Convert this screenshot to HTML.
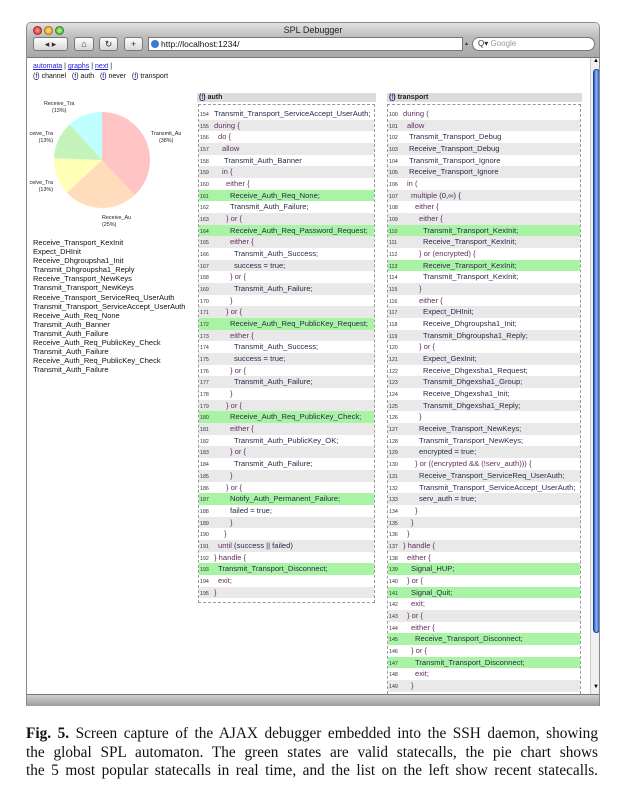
<!DOCTYPE html>
<html><head><meta charset="utf-8"><style>
*{margin:0;padding:0;box-sizing:border-box}
body{width:624px;height:800px;background:#fff;position:relative;overflow:hidden;font-family:"Liberation Sans",sans-serif}
.a{position:absolute}
.win{left:26px;top:22px;width:574px;height:684px;border:1px solid #8a8a8a;border-radius:5px 5px 0 0;overflow:hidden;background:#fff}
.tb{left:0;top:0;width:574px;height:35px;background:linear-gradient(#e2e2e2,#bdbdbd 40%,#a9a9a9);border-bottom:1px solid #777}
.dot{width:9px;height:9px;border-radius:50%;top:3px;border:1px solid rgba(0,0,0,.35)}
.btn{top:14px;height:14px;background:linear-gradient(#fdfdfd,#d8d8d8);border:1px solid #777;border-radius:3px;font-size:9px;text-align:center;line-height:12px;color:#333}
.fld{background:#fff;border:1px solid #777;height:14px;top:14px}
.sb{left:563px;top:35px;width:10px;height:637px;background:#f0f0f0;border-left:1px solid #ccc}
.thumb{left:2px;top:11px;width:7px;height:564px;border-radius:4px;background:linear-gradient(90deg,#2a5cc8,#8fb8f5 50%,#2a5cc8);border:1px solid #1d3f99}
.lk{font-size:7px;color:#111}
.lk u{color:#1a1ad0}
.hd{height:9px;background:#dcdcdc;font-size:7px;font-weight:bold;color:#222;line-height:9px;padding-left:2px}
.hd u{color:#1a1ad0;font-weight:normal}
.box{border:1px dashed #999;padding:3px 0 3px 0}
.r{height:11.68px;line-height:11.68px;font-size:7.6px;color:#2a2a4a;white-space:nowrap;position:relative}
.r:nth-child(even){background:#e9e9e9}
.r.g{background:#a8f4a4}
.r b{display:inline-block;width:15px;font-weight:normal;font-size:5.3px;color:#333;padding-left:1px}
.r i{font-style:normal}
.k{color:#62305f}
.list div{height:9.1px;line-height:9.1px;font-size:7.5px;color:#111;white-space:nowrap}
.pl{font-size:5.4px;color:#222;text-align:center;line-height:7px;white-space:nowrap}
.cap{left:26px;top:725px;width:572px;font-family:"Liberation Serif",serif;font-size:15.3px;line-height:18.5px;color:#111}
.cap div{text-align:justify;text-align-last:justify;white-space:nowrap}
</style></head><body>
<div class="a win">
 <div class="a tb">
  <div class="a dot" style="left:6px;background:radial-gradient(#f99,#d22)"></div>
  <div class="a dot" style="left:17px;background:radial-gradient(#fd9,#e90)"></div>
  <div class="a dot" style="left:28px;background:radial-gradient(#bf9,#3a2)"></div>
  <div class="a" style="left:0;width:572px;top:2px;text-align:center;font-size:9px;color:#222">SPL Debugger</div>
  <div class="a btn" style="left:6px;width:35px">◂ ▸</div>
  <div class="a btn" style="left:47px;width:20px">⌂</div>
  <div class="a btn" style="left:72px;width:19px">↻</div>
  <div class="a btn" style="left:97px;width:19px">+</div>
  <div class="a fld" style="left:121px;width:315px;font-size:8.5px;line-height:12px;padding-left:12px;color:#111"><span class="a" style="left:2px;top:2px;width:8px;height:8px;border-radius:50%;background:#3a7ad8"></span>http://localhost:1234/</div>
  <div class="a" style="left:438px;top:17px;font-size:6px;color:#333">▴</div>
  <div class="a fld" style="left:445px;width:123px;border-radius:7px;font-size:8px;line-height:12px;padding-left:5px;color:#999"><span style="color:#333">Q▾</span> Google</div>
 </div>
 <div class="a lk" style="left:6px;top:40px"><u>automata</u> | <u>graphs</u> | <u>next</u> |</div>
 <div class="a lk" style="left:6px;top:50px">(<u>f</u>) channel &nbsp; (<u>f</u>) auth &nbsp; (<u>f</u>) never &nbsp; (<u>f</u>) transport</div>
 <div class="a sb"><div class="a" style="left:2px;top:0;font-size:6px">▲</div><div class="a thumb"></div><div class="a" style="left:2px;top:626px;font-size:6px">▼</div></div>
</div>

<svg class="a" style="left:0;top:0" width="200" height="240">
 <path d="M102 160 L102 112 A48 48 0 0 1 134.7 195.1Z" fill="#ffc4c4"/>
 <path d="M102 160 L134.7 195.1 A48 48 0 0 1 66.9 192.7Z" fill="#ffdcbc"/>
 <path d="M102 160 L66.9 192.7 A48 48 0 0 1 54 158.3Z" fill="#ffffb8"/>
 <path d="M102 160 L54 158.3 A48 48 0 0 1 69.9 124.3Z" fill="#c4f4bc"/>
 <path d="M102 160 L69.9 124.3 A48 48 0 0 1 102 112Z" fill="#c0ffff"/>
</svg>
<div class="a pl" style="left:44px;top:101px">Receive_Tra<br>(13%)</div>
<div class="a pl" style="left:27px;top:131px;width:26px;overflow:hidden;text-align:right">ceive_Tra<br>(13%)</div>
<div class="a pl" style="left:27px;top:180px;width:26px;overflow:hidden;text-align:right">ceive_Tra<br>(13%)</div>
<div class="a pl" style="left:151px;top:131px">Transmit_Au<br>(38%)</div>
<div class="a pl" style="left:102px;top:215px;text-align:left">Receive_Au<br>(25%)</div>

<div class="a list" style="left:33px;top:238px">
<div>Receive_Transport_KexInit</div><div>Expect_DHInit</div><div>Receive_Dhgroupsha1_Init</div><div>Transmit_Dhgroupsha1_Reply</div><div>Receive_Transport_NewKeys</div><div>Transmit_Transport_NewKeys</div><div>Receive_Transport_ServiceReq_UserAuth</div><div>Transmit_Transport_ServiceAccept_UserAuth</div><div>Receive_Auth_Req_None</div><div>Transmit_Auth_Banner</div><div>Transmit_Auth_Failure</div><div>Receive_Auth_Req_PublicKey_Check</div><div>Transmit_Auth_Failure</div><div>Receive_Auth_Req_PublicKey_Check</div><div>Transmit_Auth_Failure</div>
</div>

<div class="a hd" style="left:197px;top:93px;width:179px">(<u>f</u>) auth</div>
<div class="a box" style="left:198px;top:104px;width:177px;height:499px">
<div>
<div class="r"><b>154</b><i>Transmit_Transport_ServiceAccept_UserAuth;</i></div>
<div class="r"><b>155</b><i class="k">during {</i></div>
<div class="r"><b>156</b><i class="k" style="padding-left:4px">do {</i></div>
<div class="r"><b>157</b><i class="k" style="padding-left:8px">allow</i></div>
<div class="r"><b>158</b><i style="padding-left:10px">Transmit_Auth_Banner</i></div>
<div class="r"><b>159</b><i class="k" style="padding-left:8px">in {</i></div>
<div class="r"><b>160</b><i class="k" style="padding-left:12px">either {</i></div>
<div class="r g"><b>161</b><i style="padding-left:16px">Receive_Auth_Req_None;</i></div>
<div class="r"><b>162</b><i style="padding-left:16px">Transmit_Auth_Failure;</i></div>
<div class="r"><b>163</b><i class="k" style="padding-left:12px">} or {</i></div>
<div class="r g"><b>164</b><i style="padding-left:16px">Receive_Auth_Req_Password_Request;</i></div>
<div class="r"><b>165</b><i class="k" style="padding-left:16px">either {</i></div>
<div class="r"><b>166</b><i style="padding-left:20px">Transmit_Auth_Success;</i></div>
<div class="r"><b>167</b><i style="padding-left:20px">success = true;</i></div>
<div class="r"><b>168</b><i class="k" style="padding-left:16px">} or {</i></div>
<div class="r"><b>169</b><i style="padding-left:20px">Transmit_Auth_Failure;</i></div>
<div class="r"><b>170</b><i class="k" style="padding-left:16px">}</i></div>
<div class="r"><b>171</b><i class="k" style="padding-left:12px">} or {</i></div>
<div class="r g"><b>172</b><i style="padding-left:16px">Receive_Auth_Req_PublicKey_Request;</i></div>
<div class="r"><b>173</b><i class="k" style="padding-left:16px">either {</i></div>
<div class="r"><b>174</b><i style="padding-left:20px">Transmit_Auth_Success;</i></div>
<div class="r"><b>175</b><i style="padding-left:20px">success = true;</i></div>
<div class="r"><b>176</b><i class="k" style="padding-left:16px">} or {</i></div>
<div class="r"><b>177</b><i style="padding-left:20px">Transmit_Auth_Failure;</i></div>
<div class="r"><b>178</b><i class="k" style="padding-left:16px">}</i></div>
<div class="r"><b>179</b><i class="k" style="padding-left:12px">} or {</i></div>
<div class="r g"><b>180</b><i style="padding-left:16px">Receive_Auth_Req_PublicKey_Check;</i></div>
<div class="r"><b>181</b><i class="k" style="padding-left:16px">either {</i></div>
<div class="r"><b>182</b><i style="padding-left:20px">Transmit_Auth_PublicKey_OK;</i></div>
<div class="r"><b>183</b><i class="k" style="padding-left:16px">} or {</i></div>
<div class="r"><b>184</b><i style="padding-left:20px">Transmit_Auth_Failure;</i></div>
<div class="r"><b>185</b><i class="k" style="padding-left:16px">}</i></div>
<div class="r"><b>186</b><i class="k" style="padding-left:12px">} or {</i></div>
<div class="r g"><b>187</b><i style="padding-left:16px">Notify_Auth_Permanent_Failure;</i></div>
<div class="r"><b>188</b><i style="padding-left:16px">failed = true;</i></div>
<div class="r"><b>189</b><i class="k" style="padding-left:16px">}</i></div>
<div class="r"><b>190</b><i class="k" style="padding-left:10px">}</i></div>
<div class="r"><b>191</b><i style="padding-left:4px"><span class="k">until</span> (success || failed)</i></div>
<div class="r"><b>192</b><i class="k">} handle {</i></div>
<div class="r g"><b>193</b><i style="padding-left:4px">Transmit_Transport_Disconnect;</i></div>
<div class="r"><b>194</b><i class="k" style="padding-left:4px">exit;</i></div>
<div class="r"><b>195</b><i class="k">}</i></div>
</div></div>

<div class="a hd" style="left:387px;top:93px;width:195px">(<u>f</u>) transport</div>
<div class="a box" style="left:387px;top:104px;width:194px;height:600px;border-bottom:none">
<div>
<div class="r"><b>100</b><i class="k">during (</i></div>
<div class="r"><b>101</b><i class="k" style="padding-left:4px">allow</i></div>
<div class="r"><b>102</b><i style="padding-left:6px">Transmit_Transport_Debug</i></div>
<div class="r"><b>103</b><i style="padding-left:6px">Receive_Transport_Debug</i></div>
<div class="r"><b>104</b><i style="padding-left:6px">Transmit_Transport_Ignore</i></div>
<div class="r"><b>105</b><i style="padding-left:6px">Receive_Transport_Ignore</i></div>
<div class="r"><b>106</b><i class="k" style="padding-left:4px">in (</i></div>
<div class="r"><b>107</b><i style="padding-left:8px"><span class="k">multiple</span> (0,∞) {</i></div>
<div class="r"><b>108</b><i class="k" style="padding-left:12px">either {</i></div>
<div class="r"><b>109</b><i class="k" style="padding-left:16px">either {</i></div>
<div class="r g"><b>110</b><i style="padding-left:20px">Transmit_Transport_KexInit;</i></div>
<div class="r"><b>111</b><i style="padding-left:20px">Receive_Transport_KexInit;</i></div>
<div class="r"><b>112</b><i class="k" style="padding-left:16px">} or (encrypted) {</i></div>
<div class="r g"><b>113</b><i style="padding-left:20px">Receive_Transport_KexInit;</i></div>
<div class="r"><b>114</b><i style="padding-left:20px">Transmit_Transport_KexInit;</i></div>
<div class="r"><b>115</b><i class="k" style="padding-left:16px">}</i></div>
<div class="r"><b>116</b><i class="k" style="padding-left:16px">either {</i></div>
<div class="r"><b>117</b><i style="padding-left:20px">Expect_DHInit;</i></div>
<div class="r"><b>118</b><i style="padding-left:20px">Receive_Dhgroupsha1_Init;</i></div>
<div class="r"><b>119</b><i style="padding-left:20px">Transmit_Dhgroupsha1_Reply;</i></div>
<div class="r"><b>120</b><i class="k" style="padding-left:16px">} or {</i></div>
<div class="r"><b>121</b><i style="padding-left:20px">Expect_GexInit;</i></div>
<div class="r"><b>122</b><i style="padding-left:20px">Receive_Dhgexsha1_Request;</i></div>
<div class="r"><b>123</b><i style="padding-left:20px">Transmit_Dhgexsha1_Group;</i></div>
<div class="r"><b>124</b><i style="padding-left:20px">Receive_Dhgexsha1_Init;</i></div>
<div class="r"><b>125</b><i style="padding-left:20px">Transmit_Dhgexsha1_Reply;</i></div>
<div class="r"><b>126</b><i class="k" style="padding-left:16px">}</i></div>
<div class="r"><b>127</b><i style="padding-left:16px">Receive_Transport_NewKeys;</i></div>
<div class="r"><b>128</b><i style="padding-left:16px">Transmit_Transport_NewKeys;</i></div>
<div class="r"><b>129</b><i style="padding-left:16px">encrypted = true;</i></div>
<div class="r"><b>130</b><i class="k" style="padding-left:12px">} or ((encrypted &amp;&amp; (!serv_auth))) {</i></div>
<div class="r"><b>131</b><i style="padding-left:16px">Receive_Transport_ServiceReq_UserAuth;</i></div>
<div class="r"><b>132</b><i style="padding-left:16px">Transmit_Transport_ServiceAccept_UserAuth;</i></div>
<div class="r"><b>133</b><i style="padding-left:16px">serv_auth = true;</i></div>
<div class="r"><b>134</b><i class="k" style="padding-left:12px">}</i></div>
<div class="r"><b>135</b><i class="k" style="padding-left:8px">}</i></div>
<div class="r"><b>136</b><i class="k" style="padding-left:4px">}</i></div>
<div class="r"><b>137</b><i class="k">} handle {</i></div>
<div class="r"><b>138</b><i class="k" style="padding-left:4px">either {</i></div>
<div class="r g"><b>139</b><i style="padding-left:8px">Signal_HUP;</i></div>
<div class="r"><b>140</b><i class="k" style="padding-left:4px">} or {</i></div>
<div class="r g"><b>141</b><i style="padding-left:8px">Signal_Quit;</i></div>
<div class="r"><b>142</b><i class="k" style="padding-left:8px">exit;</i></div>
<div class="r"><b>143</b><i class="k" style="padding-left:4px">} or {</i></div>
<div class="r"><b>144</b><i class="k" style="padding-left:8px">either {</i></div>
<div class="r g"><b>145</b><i style="padding-left:12px">Receive_Transport_Disconnect;</i></div>
<div class="r"><b>146</b><i class="k" style="padding-left:8px">} or {</i></div>
<div class="r g"><b>147</b><i style="padding-left:12px">Transmit_Transport_Disconnect;</i></div>
<div class="r"><b>148</b><i class="k" style="padding-left:12px">exit;</i></div>
<div class="r"><b>149</b><i class="k" style="padding-left:8px">}</i></div>
</div></div>
<div class="a" style="left:27px;top:694px;width:572px;height:12px;background:linear-gradient(#cfcfcf,#9d9d9d);border-top:1px solid #777"></div>

<div class="a cap">
<div><b>Fig. 5.</b> Screen capture of the AJAX debugger embedded into the SSH daemon, showing</div>
<div>the global SPL automaton. The green states are valid statecalls, the pie chart shows</div>
<div>the 5 most popular statecalls in real time, and the list on the left show recent statecalls.</div>
</div>
</body></html>
